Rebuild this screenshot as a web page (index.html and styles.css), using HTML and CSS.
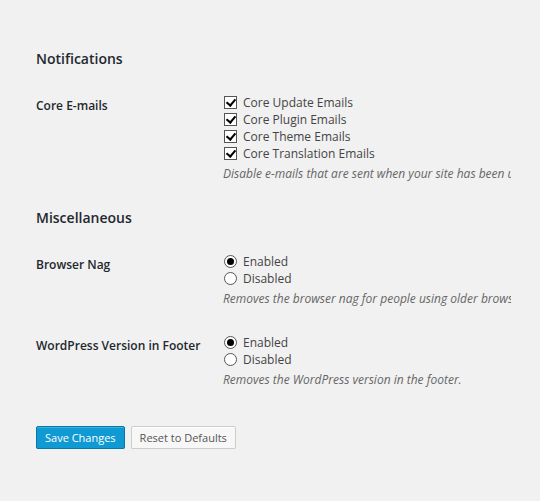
FILE: index.html
```html
<!DOCTYPE html>
<html>
<head>
<meta charset="utf-8">
<link rel="stylesheet" href="styles.css">
</head>
<body>
<div class="wrap">
  <h2 class="section-title first">Notifications</h2>
  <div class="row row-emails">
    <div class="label">Core E-mails</div>
    <div class="field">
      <label class="opt"><span class="cb checked"></span>Core Update Emails</label>
      <label class="opt"><span class="cb checked"></span>Core Plugin Emails</label>
      <label class="opt"><span class="cb checked"></span>Core Theme Emails</label>
      <label class="opt"><span class="cb checked"></span>Core Translation Emails</label>
      <p class="desc">Disable e-mails that are sent when your site has been updated automatically.</p>
    </div>
  </div>

  <h2 class="section-title second">Miscellaneous</h2>
  <div class="row row-nag">
    <div class="label">Browser Nag</div>
    <div class="field">
      <label class="opt"><span class="rb checked"></span>Enabled</label>
      <label class="opt"><span class="rb"></span>Disabled</label>
      <p class="desc">Removes the browser nag for people using older browsers.</p>
    </div>
  </div>
  <div class="row row-footer">
    <div class="label">WordPress Version in Footer</div>
    <div class="field">
      <label class="opt"><span class="rb checked"></span>Enabled</label>
      <label class="opt"><span class="rb"></span>Disabled</label>
      <p class="desc">Removes the WordPress version in the footer.</p>
    </div>
  </div>

  <div class="actions">
    <button class="btn btn-primary">Save Changes</button>
    <button class="btn btn-secondary">Reset to Defaults</button>
  </div>
</div>
</body>
</html>
```

FILE: styles.css
```css
html, body {
  margin: 0;
  padding: 0;
  background: #f1f1f1;
}
body {
  font-family: "Open Sans", "Liberation Sans", sans-serif;
  font-size: 12px;
  color: #444;
}
.wrap {
  padding: 0 0 0 36px;
  width: 475px;
  overflow: hidden;
}
.section-title {
  font-size: 14px;
  font-weight: 600;
  color: #23282d;
  margin: 0;
  line-height: 20px;
}
.section-title.first {
  padding-top: 49px;
}
.section-title.second {
  margin-top: 26px;
}
.row {
  display: flex;
}
.row-emails {
  margin-top: 25px;
}
.row-nag {
  margin-top: 25px;
}
.row-footer {
  margin-top: 27px;
}
.label {
  width: 187px;
  flex: none;
  font-weight: 600;
  color: #23282d;
  line-height: 17px;
  padding-top: 3px;
}
.field {
  flex: 1;
  min-width: 0;
  overflow: hidden;
  white-space: nowrap;
}
.opt {
  display: flex;
  align-items: center;
  height: 17px;
  line-height: 17px;
}
.cb {
  box-sizing: border-box;
  width: 13px;
  height: 13px;
  border: 1px solid #555;
  background: #fff;
  margin: 0 6px 0 1px;
  position: relative;
}
.cb.checked::after {
  content: "";
  position: absolute;
  left: 3px;
  top: 0px;
  width: 4px;
  height: 7px;
  border: solid #000;
  border-width: 0 2px 2px 0;
  transform: rotate(40deg);
}
.rb {
  box-sizing: border-box;
  width: 13px;
  height: 13px;
  border: 1px solid #555;
  border-radius: 50%;
  background: #fff;
  margin: 0 6px 0 1px;
  position: relative;
}
.rb.checked::after {
  content: "";
  position: absolute;
  left: 2px;
  top: 2px;
  width: 7px;
  height: 7px;
  border-radius: 50%;
  background: #000;
}
.desc {
  margin: 3px 0 0;
  font-style: italic;
  color: #666;
  font-size: 12px;
  line-height: 17px;
}
.actions {
  display: flex;
  gap: 6px;
  margin-top: 38px;
}
.btn {
  font-family: "Open Sans", "Liberation Sans", sans-serif;
  font-size: 11px;
  height: 23px;
  padding: 0 8px;
  border-radius: 2px;
  cursor: pointer;
  line-height: 21px;
}
.btn-primary {
  background: #0f9ad3;
  border: 1px solid #0678a6;
  color: #fff;
  box-shadow: inset 0 1px 0 rgba(120, 200, 230, 0.5), 0 1px 0 rgba(0, 0, 0, 0.15);
}
.btn-secondary {
  background: #f7f7f7;
  border: 1px solid #cccccc;
  color: #555;
  box-shadow: inset 0 1px 0 #fff, 0 1px 0 rgba(0, 0, 0, 0.08);
}
```
